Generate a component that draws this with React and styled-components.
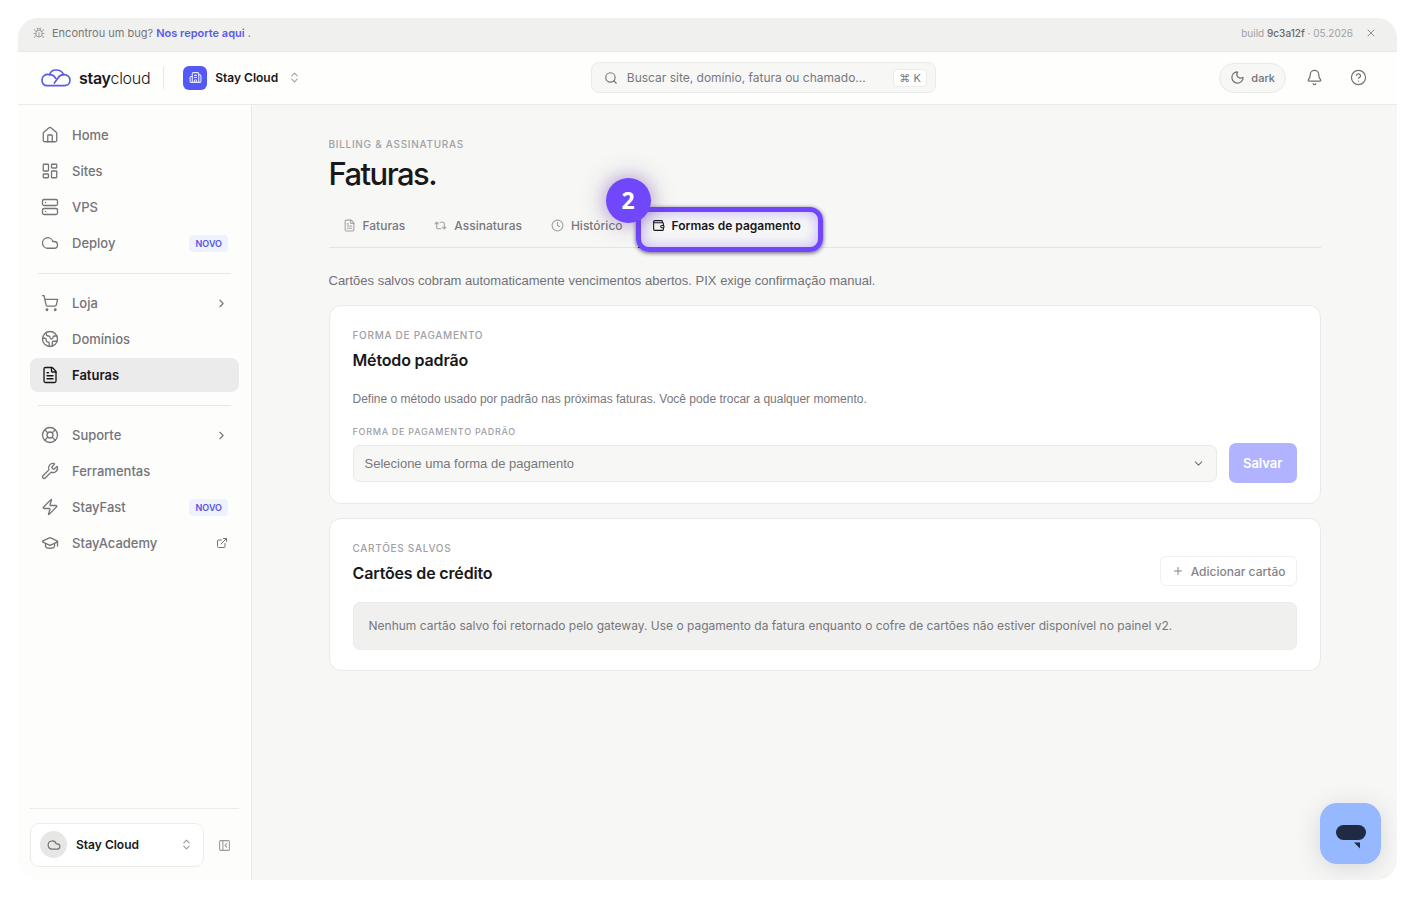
import React, { useState } from "react";
import styled, { createGlobalStyle } from "styled-components";
import {
    Bell, Bug, Building2, ChevronDown, ChevronRight, ChevronsUpDown, CircleHelp, Clock4, Cloud, Earth,
    ExternalLink, FileText, GraduationCap, House, LayoutDashboard, LifeBuoy, Moon, PanelLeftClose, Plus,
    Repeat2, Search, Server, ShoppingCart, Wallet, Wrench, X, Zap,
} from "lucide-react";

const bodyFont = `"Liberation Sans", Arial, sans-serif`;

const GlobalStyle = createGlobalStyle`
    * { box-sizing: border-box; }
    body {
        margin: 0;
        background: #ffffff;
        color: #18181b;
        font-family: Inter, "Liberation Sans", sans-serif;
        font-size: 13px;
    }
    button, input, select { font-family: inherit; }
    a { color: inherit; text-decoration: none; }
    h1, h2, p { margin: 0; }
`;

const Frame = styled.div`
    position: relative;
    display: flex;
    flex-direction: column;
    min-height: calc(100vh - 36px);
    margin: 18px;
    border-radius: 20px;
    overflow: hidden;
    background: #f7f7f6;
`;

const Banner = styled.div`
    display: flex;
    align-items: center;
    justify-content: space-between;
    height: 34px;
    padding: 0 20px 3px 15px;
    background: #f0f0ef;
    border-bottom: 1px solid #e9e9e8;
    color: #77777c;
    font-size: 11px;
`;

const BannerSide = styled.div`
    display: flex;
    align-items: center;
    gap: ${(props) => props.$gap}px;
    svg { color: #8f8f94; }
`;

const BugLink = styled.a`
    color: #5a5be8;
    font-weight: 600;
`;

const Build = styled.span`
    color: #a0a0a5;
    font-size: 10px;
    b { color: #68686d; font-weight: 500; }
`;

const IconButton = styled.button`
    display: flex;
    align-items: center;
    justify-content: center;
    padding: 0;
    border: 0;
    background: none;
    color: #727277;
    cursor: pointer;
`;

const Header = styled.header`
    display: flex;
    align-items: center;
    justify-content: space-between;
    height: 53px;
    padding: 0 30px 1px 23px;
    background: #fefefd;
    border-bottom: 1px solid #eaeae9;
`;

const HeaderLeft = styled.div`
    display: flex;
    align-items: center;
`;

const Brand = styled.a`
    display: flex;
    align-items: center;
    gap: 8px;
    padding-right: 13px;
    border-right: 1px solid #e8e8e8;
    line-height: 22px;
    font-size: 16px;
    font-weight: 300;
    letter-spacing: -0.02em;
    b { font-weight: 600; }
`;

const Workspace = styled.button`
    display: flex;
    align-items: center;
    gap: 8px;
    margin-left: 19px;
    padding: 0 6px 0 0;
    border: 0;
    background: none;
    color: #18181b;
    font-size: 12px;
    font-weight: 600;
    > svg { margin-left: 2px; color: #a2a2a6; }
`;

const WorkspaceIcon = styled.span`
    display: flex;
    align-items: center;
    justify-content: center;
    width: 24px;
    height: 24px;
    border-radius: 6px;
    background: #5459f5;
    color: #e8e8ff;
`;

const SearchBox = styled.label`
    display: flex;
    align-items: center;
    flex: 0 1 345px;
    gap: 9px;
    height: 31px;
    padding: 0 8px 0 12px;
    border: 1px solid #eaeae9;
    border-radius: 8px;
    background: #f7f7f6;
    color: #77777c;
    input {
        flex: 1;
        min-width: 0;
        padding: 0;
        border: 0;
        outline: none;
        background: none;
        color: #77777c;
        font-size: 12px;
    }
    input::placeholder { color: #77777c; opacity: 1; }
`;

const Kbd = styled.kbd`
    padding: 0 5px;
    border: 1px solid #ebebea;
    border-radius: 4px;
    background: #ffffff;
    font-family: Inter, "DejaVu Sans", sans-serif;
    font-size: 11px;
    line-height: 16px;
`;

const HeaderRight = styled.div`
    display: flex;
    align-items: center;
    justify-content: flex-end;
    gap: 27px;
`;

const ThemeButton = styled.button`
    display: flex;
    align-items: center;
    gap: 6px;
    height: 30px;
    margin-right: -7px;
    padding: 0 10px;
    border: 1px solid #e9e9e8;
    border-radius: 15px;
    background: #f7f7f6;
    color: #727277;
    font-size: 11px;
    font-weight: 500;
`;

const Body = styled.div`
    display: flex;
    flex: 1;
`;

const Sidebar = styled.aside`
    display: flex;
    flex-direction: column;
    justify-content: space-between;
    flex: 0 0 234px;
    padding: 13px 12px;
    background: #fdfdfc;
    border-right: 1px solid #e9e9e8;
`;

const NavGroup = styled.div`
    display: flex;
    flex-direction: column;
    gap: 2px;
    & + & { margin-top: 13px; }
    & + &::before {
        content: "";
        margin: 0 8px 10px;
        border-top: 1px solid #e7e7e6;
    }
`;

const NavLink = styled.a`
    display: flex;
    align-items: center;
    gap: 13px;
    height: 34px;
    padding: 0 11px;
    border-radius: 8px;
    background: ${(props) => (props.$active ? "#ebebeb" : "transparent")};
    color: ${(props) => (props.$active ? "#18181b" : "#747479")};
    font-weight: ${(props) => (props.$active ? 600 : 500)};
    span { flex: 1; }
`;

const NewBadge = styled.em`
    padding: 0 6px;
    border-radius: 4px;
    background: #eef1fe;
    color: #5655dc;
    font-size: 9px;
    font-style: normal;
    font-weight: 600;
    line-height: 17px;
`;

const SidebarFooter = styled.div`
    display: flex;
    align-items: center;
    gap: 14px;
    padding: 14px 8px 0 0;
    border-top: 1px solid #ebebea;
`;

const Account = styled.button`
    display: flex;
    flex: 1;
    align-items: center;
    gap: 9px;
    height: 44px;
    padding: 0 10px 1px 9px;
    border: 1px solid #ececeb;
    border-radius: 9px;
    background: #ffffff;
    color: #18181b;
    font-size: 12px;
    font-weight: 600;
    text-align: left;
    > span:nth-child(2) { flex: 1; }
    > svg { color: #9a9a9f; }
`;

const Avatar = styled.span`
    display: flex;
    align-items: center;
    justify-content: center;
    width: 27px;
    height: 27px;
    border-radius: 50%;
    background: #e6e6e5;
    color: #727277;
`;

const Main = styled.main`
    flex: 1;
    min-width: 0;
    padding: 32px 32px 40px;
`;

const Content = styled.div`
    max-width: 992px;
    margin: 0 auto;
`;

const Eyebrow = styled.p`
    color: #a0a0a5;
    font-size: 10px;
    font-weight: 500;
    line-height: 14px;
    letter-spacing: 0.07em;
    text-transform: uppercase;
`;

const Title = styled.h1`
    margin-top: 5px;
    font-size: 31px;
    font-weight: 500;
    line-height: 36px;
    letter-spacing: -0.05em;
`;

const Tabs = styled.div`
    display: flex;
    gap: 2px;
    margin-top: 14px;
    border-bottom: 1px solid #e3e3e2;
`;

const Tab = styled.button`
    position: relative;
    display: flex;
    align-items: center;
    gap: 7px;
    height: 42px;
    margin-bottom: -1px;
    padding: 0 13px 3px 14px;
    border: 0;
    border-bottom: 1px solid ${(props) => (props.$active ? "#18181b" : "transparent")};
    background: none;
    color: ${(props) => (props.$active ? "#18181b" : "#77777c")};
    font-size: 12px;
    font-weight: ${(props) => (props.$active ? 600 : 500)};
    > svg { color: ${(props) => (props.$active ? "#18181b" : "#a2a2a6")}; }
`;

const Highlight = styled.span`
    position: absolute;
    inset: 1px -9px -5px -2px;
    border: 5px solid #7047fb;
    border-radius: 13px;
    box-shadow: 0 1px 4px rgba(30, 20, 60, 0.7), inset 0 0 14px rgba(112, 71, 251, 0.4);
    pointer-events: none;
`;

const Step = styled.span`
    position: absolute;
    top: -28px;
    left: -32px;
    display: flex;
    align-items: center;
    justify-content: center;
    width: 45px;
    height: 45px;
    padding-bottom: 2px;
    border-radius: 50%;
    background: #7047fb;
    box-shadow: 0 0 14px rgba(150, 80, 255, 0.3), 0 0 26px rgba(60, 40, 80, 0.35);
    color: #ffffff;
    font-family: "Open Sans", sans-serif;
    font-size: 23px;
    font-weight: 700;
`;

const Lead = styled.p`
    margin-top: 24px;
    color: #727277;
    font-family: ${bodyFont};
    line-height: 18px;
`;

const Card = styled.section`
    margin-top: ${(props) => props.$top}px;
    padding: 22px 23px 20px;
    border: 1px solid #e9e9e8;
    border-radius: 12px;
    background: #ffffff;
`;

const CardHead = styled.div`
    display: flex;
    align-items: flex-end;
    justify-content: space-between;
`;

const CardTitle = styled.h2`
    margin-top: 7px;
    font-size: 16px;
    font-weight: 600;
    line-height: 22px;
    letter-spacing: -0.01em;
`;

const CardText = styled.p`
    margin-top: 19px;
    color: #77777c;
    font-family: ${bodyFont};
    font-size: 12px;
    line-height: 18px;
`;

const FieldLabel = styled.label`
    display: block;
    margin: 17px 0 4px;
    color: #a0a0a5;
    font-size: 9px;
    font-weight: 500;
    line-height: 14px;
    letter-spacing: 0.08em;
    text-transform: uppercase;
`;

const FieldRow = styled.div`
    display: flex;
    align-items: center;
    gap: 12px;
`;

const SelectWrap = styled.div`
    display: grid;
    flex: 1;
    align-items: center;
    > * { grid-area: 1 / 1; }
    svg {
        justify-self: end;
        margin-right: 12px;
        color: #727277;
        pointer-events: none;
    }
`;

const Select = styled.select`
    width: 100%;
    height: 37px;
    padding: 0 32px 0 11px;
    border: 1px solid #e9e9e8;
    border-radius: 7px;
    appearance: none;
    background: #f7f7f6;
    color: #77777c;
    font-family: ${bodyFont};
    font-size: 13px;
`;

const SaveButton = styled.button`
    height: 40px;
    padding: 0 14px;
    border: 0;
    border-radius: 7px;
    background: #b1b3ff;
    color: #ffffff;
    font-size: 13px;
    font-weight: 600;
`;

const AddButton = styled.button`
    display: flex;
    align-items: center;
    gap: 7px;
    height: 30px;
    margin-bottom: -2px;
    padding: 0 10px 0 11px;
    border: 1px solid #f0f0ef;
    border-radius: 6px;
    background: #ffffff;
    color: #848489;
    font-size: 12px;
    font-weight: 500;
`;

const Empty = styled.p`
    margin-top: 18px;
    padding: 14px 15px;
    border: 1px solid #ebebea;
    border-radius: 7px;
    background: #f0f0ef;
    color: #77777c;
    font-size: 12px;
    line-height: 18px;
`;

const ChatButton = styled.button`
    position: absolute;
    right: 16px;
    bottom: 16px;
    display: flex;
    align-items: center;
    justify-content: center;
    width: 61px;
    height: 61px;
    padding: 6px 0 0;
    border: 0;
    border-radius: 17px;
    background: #96b8ff;
    box-shadow: 0 4px 24px rgba(60, 80, 70, 0.18);
`;

const groups = [
    [
        { label: "Home", icon: House },
        { label: "Sites", icon: LayoutDashboard },
        { label: "VPS", icon: Server },
        { label: "Deploy", icon: Cloud, isNew: true },
    ],
    [
        { label: "Loja", icon: ShoppingCart, more: true },
        { label: "Domínios", icon: Earth },
        { label: "Faturas", icon: FileText, active: true },
    ],
    [
        { label: "Suporte", icon: LifeBuoy, more: true },
        { label: "Ferramentas", icon: Wrench },
        { label: "StayFast", icon: Zap, isNew: true },
        { label: "StayAcademy", icon: GraduationCap, external: true },
    ],
];

const tabs = [
    { label: "Faturas", icon: FileText },
    { label: "Assinaturas", icon: Repeat2 },
    { label: "Histórico", icon: Clock4 },
    { label: "Formas de pagamento", icon: Wallet, step: 2 },
];

const Logo = () => (
    <svg width="30" height="18" viewBox="0 0 90 54" fill="none" stroke="#5a5be0" strokeWidth="5" strokeLinecap="round" strokeLinejoin="round" aria-hidden="true">
        <path d="M18 50H70C80 50 87 43 87 34C87 24 79 16 68 17C64 8 55 3 45 3C35 3 28 9 26 17C12 14 3 22 3 33C3 43 9 50 18 50Z" />
        <path d="M26 17C34 17 40 21 44 28M68 17C59 17 55 20 51 27L40 42" />
    </svg>
);

const SideNav = () => (
    <Sidebar>
        <nav>
            {groups.map((items, i) => (
                <NavGroup key={i}>
                    {items.map(({ label, icon: Icon, active, isNew, more, external }) => (
                        <NavLink key={label} href="#" $active={active}>
                            <Icon size={18} strokeWidth={1.75} />
                            <span>{label}</span>
                            {isNew && <NewBadge>NOVO</NewBadge>}
                            {more && <ChevronRight size={13} />}
                            {external && <ExternalLink size={12} />}
                        </NavLink>
                    ))}
                </NavGroup>
            ))}
        </nav>
        <SidebarFooter>
            <Account>
                <Avatar><Cloud size={14} /></Avatar>
                <span>Stay Cloud</span>
                <ChevronsUpDown size={13} />
            </Account>
            <IconButton aria-label="Recolher menu"><PanelLeftClose size={13} color="#9a9a9f" /></IconButton>
        </SidebarFooter>
    </Sidebar>
);

export default function App() {
    const [current, setCurrent] = useState("Formas de pagamento");

    return (
        <>
            <GlobalStyle />
            <Frame>
                <Banner>
                    <BannerSide $gap={7}>
                        <Bug size={12} strokeWidth={1.5} />
                        <span>Encontrou um bug? <BugLink href="#">Nos reporte aqui</BugLink> .</span>
                    </BannerSide>
                    <BannerSide $gap={12}>
                        <Build>build <b>9c3a12f</b> · 05.2026</Build>
                        <IconButton aria-label="Fechar"><X size={12} /></IconButton>
                    </BannerSide>
                </Banner>

                <Header>
                    <HeaderLeft>
                        <Brand href="#">
                            <Logo />
                            <span><b>stay</b>cloud</span>
                        </Brand>
                        <Workspace>
                            <WorkspaceIcon><Building2 size={13} /></WorkspaceIcon>
                            Stay Cloud
                            <ChevronsUpDown size={13} />
                        </Workspace>
                    </HeaderLeft>
                    <SearchBox>
                        <Search size={14} />
                        <input type="text" aria-label="Buscar" placeholder="Buscar site, domínio, fatura ou chamado..." />
                        <Kbd>⌘ K</Kbd>
                    </SearchBox>
                    <HeaderRight>
                        <ThemeButton><Moon size={15} />dark</ThemeButton>
                        <IconButton aria-label="Notificações"><Bell size={17} strokeWidth={1.75} /></IconButton>
                        <IconButton aria-label="Ajuda"><CircleHelp size={17} strokeWidth={1.75} /></IconButton>
                    </HeaderRight>
                </Header>

                <Body>
                    <SideNav />
                    <Main>
                        <Content>
                            <Eyebrow>Billing &amp; Assinaturas</Eyebrow>
                            <Title>Faturas.</Title>
                            <Tabs role="tablist">
                                {tabs.map(({ label, icon: Icon, step }) => (
                                    <Tab
                                        key={label}
                                        role="tab"
                                        aria-selected={current === label}
                                        $active={current === label}
                                        onClick={() => setCurrent(label)}
                                    >
                                        <Icon size={13} />
                                        {label}
                                        {step && <Highlight />}
                                        {step && <Step>{step}</Step>}
                                    </Tab>
                                ))}
                            </Tabs>
                            <Lead>Cartões salvos cobram automaticamente vencimentos abertos. PIX exige confirmação manual.</Lead>

                            <Card $top={15}>
                                <Eyebrow>Forma de pagamento</Eyebrow>
                                <CardTitle>Método padrão</CardTitle>
                                <CardText>Define o método usado por padrão nas próximas faturas. Você pode trocar a qualquer momento.</CardText>
                                <FieldLabel htmlFor="metodo">Forma de pagamento padrão</FieldLabel>
                                <FieldRow>
                                    <SelectWrap>
                                        <Select id="metodo" defaultValue="">
                                            <option value="">Selecione uma forma de pagamento</option>
                                        </Select>
                                        <ChevronDown size={13} />
                                    </SelectWrap>
                                    <SaveButton>Salvar</SaveButton>
                                </FieldRow>
                            </Card>

                            <Card $top={14}>
                                <CardHead>
                                    <div>
                                        <Eyebrow>Cartões salvos</Eyebrow>
                                        <CardTitle>Cartões de crédito</CardTitle>
                                    </div>
                                    <AddButton><Plus size={12} />Adicionar cartão</AddButton>
                                </CardHead>
                                <Empty>Nenhum cartão salvo foi retornado pelo gateway. Use o pagamento da fatura enquanto o cofre de cartões não estiver disponível no painel v2.</Empty>
                            </Card>
                        </Content>
                    </Main>
                </Body>

                <ChatButton aria-label="Abrir chat">
                    <svg width="30" height="24" viewBox="0 0 30 24" fill="#1e2b42" aria-hidden="true">
                        <rect x="0" y="0" width="30" height="15" rx="7.5" />
                        <path d="M18 17.5H24V23.5Z" />
                    </svg>
                </ChatButton>
            </Frame>
        </>
    );
}
